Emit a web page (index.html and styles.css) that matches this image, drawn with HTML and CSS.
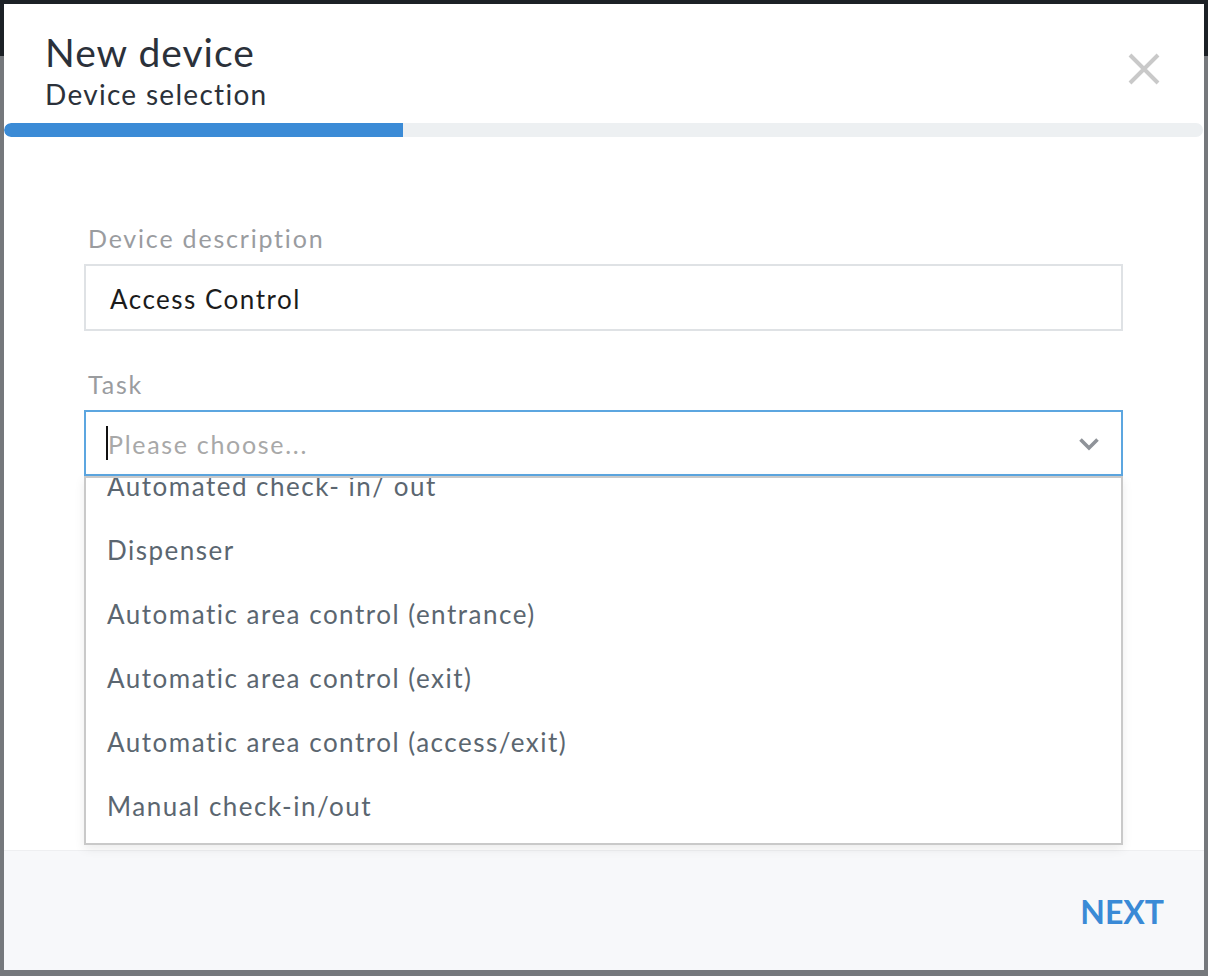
FILE: index.html
```html
<!DOCTYPE html>
<html lang="en">
<head>
<meta charset="utf-8">
<title>New device</title>
<link rel="stylesheet" href="styles.css">
</head>
<body>
<div class="modal">
  <header class="modal-header">
    <div class="titles">
      <h1 class="title">New device</h1>
      <div class="subtitle">Device selection</div>
    </div>
    <button class="close" aria-label="Close">
      <svg width="32" height="32" viewBox="0 0 32 32"><path d="M2 2 L30 30 M30 2 L2 30" stroke="#c9c9c9" stroke-width="4" fill="none"/></svg>
    </button>
  </header>
  <div class="progress"><div class="progress-fill" style="width:33.25%"></div></div>
  <main class="modal-body">
    <label class="field-label">Device description</label>
    <div class="input">Access Control</div>
    <label class="field-label task-label">Task</label>
    <div class="select-wrap">
      <div class="select">
        <span class="caret"></span>
        <span class="placeholder">Please choose...</span>
        <svg class="chevron" width="22" height="14" viewBox="0 0 22 14"><path d="M2.5 2.5 L11 11 L19.5 2.5" stroke="#8f9399" stroke-width="3.6" fill="none"/></svg>
      </div>
      <div class="dropdown">
        <ul class="options">
          <li>Automated check- in/ out</li>
          <li>Dispenser</li>
          <li>Automatic area control (entrance)</li>
          <li>Automatic area control (exit)</li>
          <li>Automatic area control (access/exit)</li>
          <li>Manual check-in/out</li>
        </ul>
      </div>
    </div>
  </main>
  <footer class="modal-footer">
    <button class="next">NEXT</button>
  </footer>
</div>
</body>
</html>
```
FILE: styles.css
```css
* { box-sizing: border-box; }
html, body { margin: 0; padding: 0; }
body {
  width: 1208px;
  height: 976px;
  overflow: hidden;
  background: linear-gradient(#1c2126 0, #1c2126 56px, #75787c 56px, #75787c 100%);
  padding: 4px 4px 6px 4px;
  font-family: Lato, "Open Sans", sans-serif;
}
.modal {
  width: 1200px;
  height: 966px;
  background: #fff;
  display: flex;
  flex-direction: column;
}
.modal-header {
  display: flex;
  justify-content: space-between;
  padding: 25px 0 0 41px;
}
.title {
  margin: 0;
  font-size: 39px;
  line-height: 46px;
  font-weight: 400;
  color: #2b313a;
  letter-spacing: 1px;
}
.subtitle {
  margin-top: 2px;
  font-size: 28px;
  line-height: 34px;
  color: #2b313a;
  letter-spacing: 1.3px;
}
.close {
  border: 0;
  background: none;
  padding: 0;
  margin: 24px 44px 0 0;
  width: 32px;
  height: 32px;
  cursor: pointer;
}
.close svg { display: block; }
.progress {
  margin-top: 12px;
  height: 14px;
  border-radius: 7px;
  background: #edf0f2;
  overflow: hidden;
  width: 1199px;
}
.progress-fill {
  height: 100%;
  background: #3b8bd6;
  border-radius: 7px 0 0 7px;
}
.modal-body {
  flex: 1;
  padding: 86px 80px 0 80px;
}
.field-label {
  display: block;
  font-size: 25px;
  line-height: 30px;
  color: #9a9c9f;
  padding-left: 4px;
  letter-spacing: 1.8px;
}
.input {
  margin-top: 11px;
  height: 67px;
  border: 2px solid #dfe2e5;
  width: 1039px;
  padding: 3px 0 0 24px;
  font-size: 26px;
  line-height: 60px;
  color: #1b1b1b;
  letter-spacing: 1.5px;
}
.task-label { margin-top: 38px; }
.select-wrap {
  position: relative;
  margin-top: 11px;
  width: 1039px;
}
.select {
  height: 66px;
  border: 2px solid #5ca6e0;
  display: flex;
  align-items: center;
  padding-left: 20px;
  padding-right: 21px;
}
.caret {
  width: 2px;
  height: 34px;
  background: #111;
}
.placeholder {
  flex: 1;
  font-size: 25px;
  color: #a8a8a8;
  letter-spacing: 1.7px;
  padding-top: 2px;
}
.chevron { display: block; margin-top: 2px; }
.dropdown {
  position: absolute;
  top: 100%;
  left: 0;
  right: 0;
  height: 369px;
  border: 2px solid #c9c9c9;
  background: #fff;
  overflow: hidden;
  box-shadow: 0 4px 10px rgba(0,0,0,0.08);
  z-index: 2;
}
.options {
  list-style: none;
  margin: -24px 0 0 0;
  padding: 0;
}
.options li {
  height: 64px;
  line-height: 64px;
  padding-left: 21px;
  font-size: 26px;
  color: #5b6670;
  letter-spacing: 1.5px;
}
.modal-footer {
  height: 120px;
  background: #f7f8fa;
  border-top: 1px solid #eeeff1;
  display: flex;
  justify-content: flex-end;
  align-items: center;
  padding-right: 40px;
}
.next {
  border: 0;
  background: none;
  padding: 0;
  font-family: Lato, sans-serif;
  font-size: 32px;
  font-weight: 700;
  color: #3a8ad6;
  margin-top: 2px;
  cursor: pointer;
}
```
